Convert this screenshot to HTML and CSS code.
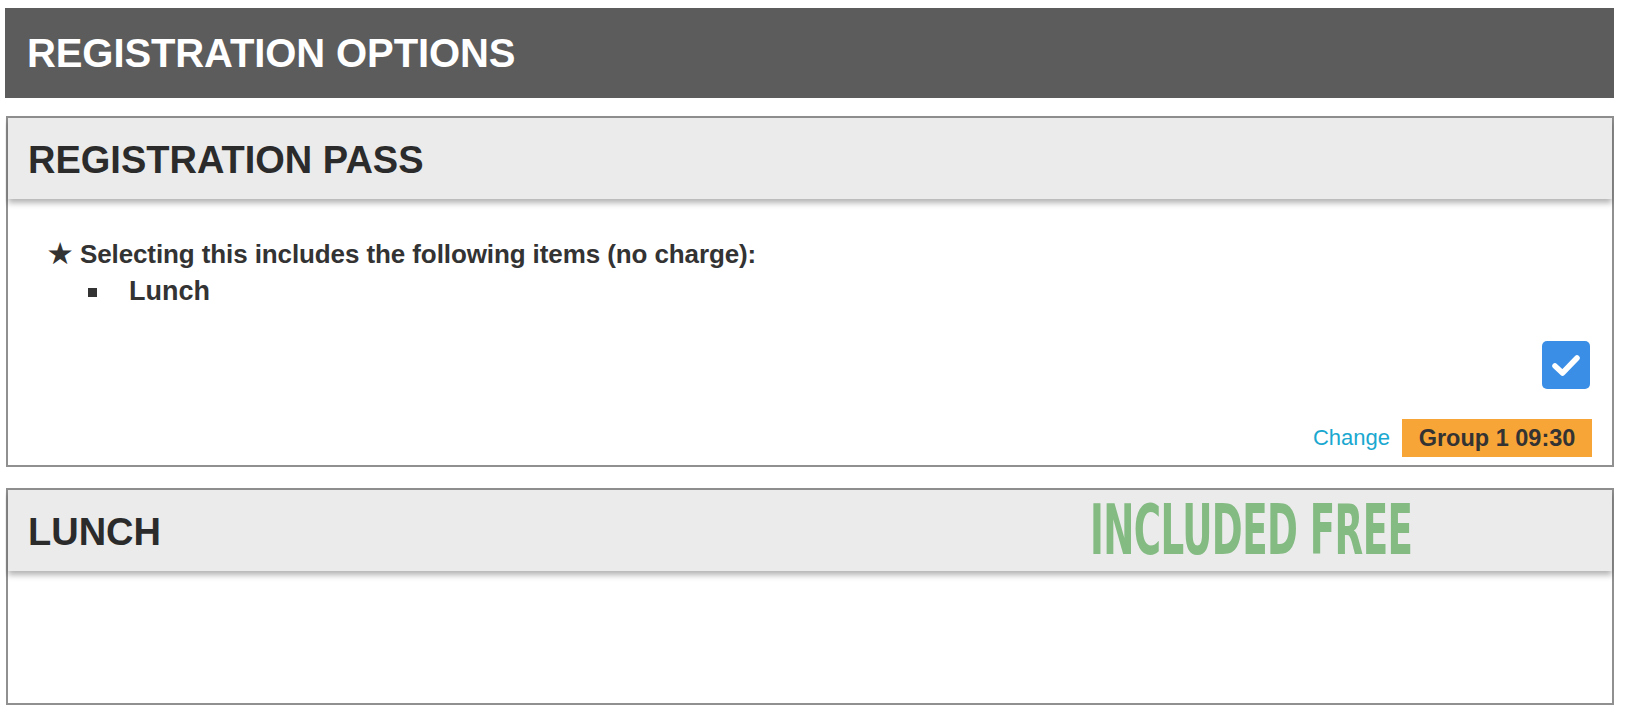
FILE: index.html
```html
<!DOCTYPE html>
<html lang="en">
<head>
    <meta charset="UTF-8">
    <title>Registration Options</title>
    <link rel="stylesheet" href="styles.css">
</head>
<body>

<div class="page-title">REGISTRATION OPTIONS</div>

<div class="option-panel">
    <div class="option-header">
        <div class="option-name">REGISTRATION PASS</div>
    </div>
    <div class="option-body">
        <div class="includes-text"><span class="star">&#9733;</span>Selecting this includes the following items (no charge):</div>
        <ul class="includes-list">
            <li>Lunch</li>
        </ul>
        <div class="check-row">
            <span class="checkbox">
                <svg width="28" height="24" viewBox="0 0 28 24">
                    <path d="M3 13 L10.5 20 L25 5" fill="none" stroke="#fff" stroke-width="5.5" stroke-linecap="round" stroke-linejoin="round"/>
                </svg>
            </span>
        </div>
        <div class="group-row">
            <a class="change-link" href="#">Change</a>
            <span class="group-badge">Group 1 09:30</span>
        </div>
    </div>
</div>

<div class="option-panel">
    <div class="option-header">
        <div class="option-name">LUNCH</div>
        <div class="free-label"><span>INCLUDED FREE</span></div>
    </div>
    <div class="option-body empty"></div>
</div>

</body>
</html>
```

FILE: styles.css
```css
body {
    font-family: "Liberation Sans", Arial, sans-serif;
    background-color: #fff;
    color: #333;
    margin: 8px 12px 0 5px;
}
.page-title {
    background-color: #5c5c5c;
    color: #fff;
    font-size: 40px;
    font-weight: bold;
    height: 90px;
    line-height: 90px;
    padding-left: 22px;
    letter-spacing: -0.1px;
}
.option-panel {
    margin: 18px 0 0 1px;
    border: 2px solid #909090;
    background-color: #fff;
}
.option-panel + .option-panel {
    margin-top: 21px;
}
.option-header {
    background-color: #ebebeb;
    height: 81px;
    display: flex;
    align-items: center;
    box-shadow: 0 4px 6px rgba(0, 0, 0, 0.3);
    position: relative;
}
.option-name {
    font-size: 38px;
    font-weight: bold;
    color: #2b2b2b;
    padding: 4px 0 0 20px;
    flex: 0 0 1062px;
    white-space: nowrap;
}
.free-label {
    color: #84bb82;
    font-family: "DejaVu Sans", sans-serif;
    font-stretch: condensed;
    font-weight: bold;
    font-size: 69px;
    height: 81px;
    line-height: 81px;
    white-space: nowrap;
    flex-shrink: 0;
}
.free-label span {
    display: inline-block;
    transform: scaleX(0.6);
    transform-origin: left center;
    letter-spacing: -1px;
}
.option-body {
    height: 266px;
    padding: 0 22px 0 40px;
}
.option-body.empty {
    height: 132px;
}
.includes-text {
    font-size: 26px;
    font-weight: bold;
    color: #333;
    padding-top: 39px;
    letter-spacing: -0.1px;
}
.star {
    font-size: 27px;
    margin-right: 8px;
}
.includes-list {
    margin: 6px 0 0 0;
    padding-left: 40px;
    list-style: none;
}
.includes-list li {
    font-size: 27px;
    font-weight: bold;
    color: #333;
    position: relative;
    padding-left: 41px;
}
.includes-list li::before {
    content: "";
    position: absolute;
    left: 0;
    top: 12px;
    width: 9px;
    height: 9px;
    background-color: #333;
}
.check-row {
    display: flex;
    justify-content: flex-end;
    margin-top: 34px;
}
.checkbox {
    width: 48px;
    height: 48px;
    border-radius: 5px;
    background-color: #3a8ee6;
    display: flex;
    align-items: center;
    justify-content: center;
}
.group-row {
    display: flex;
    justify-content: flex-end;
    align-items: center;
    margin-top: 30px;
    margin-right: -2px;
}
.change-link {
    color: #1aa8d0;
    text-decoration: none;
    font-size: 22px;
    margin-right: 12px;
}
.group-badge {
    background-color: #f8a537;
    color: #333;
    font-size: 23.5px;
    font-weight: bold;
    height: 38px;
    line-height: 38px;
    width: 190px;
    box-sizing: border-box;
    text-align: center;
}
```
